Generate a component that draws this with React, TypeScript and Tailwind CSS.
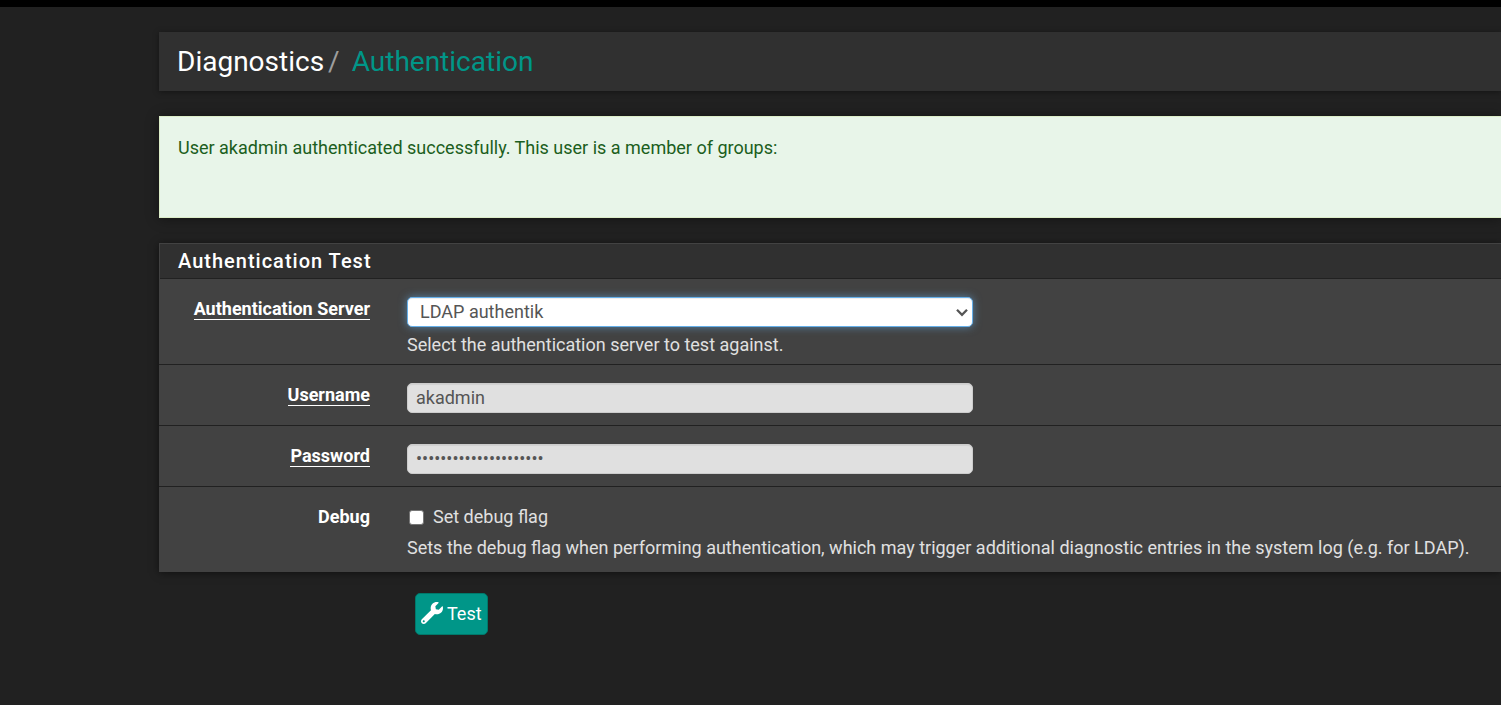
import type { ReactNode } from 'react';
import { FaWrench } from 'react-icons/fa';
import clsx from 'clsx';

const inputClass =
  'block h-[30px] w-[566px] max-w-full rounded-[5px] border border-[#cccccc] bg-[#e0e0e0] px-2 pb-0.5 text-[#555555] shadow-[inset_0_1px_1px_rgba(0,0,0,0.075)] outline-none';

interface FormRowProps {
  label: string;
  htmlFor: string;
  required?: boolean;
  last?: boolean;
  children: ReactNode;
}

function FormRow({ label, htmlFor, required, last, children }: FormRowProps) {
  return (
    <div className={clsx('flex pt-[18px]', last ? 'pb-3' : 'border-b border-[#212121] pb-[7px]')}>
      <div className="w-[211px] shrink-0 text-right leading-[23px]">
        <label htmlFor={htmlFor} className="font-bold text-white">
          <span className={clsx(required && 'inline-block border-b border-white leading-5')}>
            {label}
          </span>
        </label>
      </div>
      <div className="min-w-0 flex-1 pr-4 pl-[37px]">{children}</div>
    </div>
  );
}

export default function App() {
  return (
    <div className="min-h-screen border-t-[7px] border-black bg-[#212121] pt-[25px] pl-[159px] font-['Roboto',sans-serif] text-[18px] leading-[25px] text-[#e0e0e0]">
      {/* Breadcrumb */}
      <header className="bg-[#303030] px-[18px] py-3 shadow-[0_1px_6px_rgba(0,0,0,0.4)]">
        <h1 className="flex text-[28px] leading-[35px]">
          <a href="#" className="text-white">Diagnostics</a>
          <span className="mr-3 ml-1 text-[#9e9e9e]">/</span>
          <a href="#" className="text-[#009688]">Authentication</a>
        </h1>
      </header>

      {/* Result message */}
      <div
        role="alert"
        className="mt-[25px] h-[102px] border border-r-0 border-[#dcedc8] bg-[#e8f5e9] px-[18px] pt-[18px] text-[#1b5e20] shadow-[0_1px_12px_rgba(0,0,0,0.4)]"
      >
        User akadmin authenticated successfully. This user is a member of groups:
      </div>

      <form onSubmit={(e) => e.preventDefault()}>
        <section className="mt-[25px] bg-[#424242] shadow-[0_1px_8px_rgba(0,0,0,0.5)]">
          <div className="border-t border-l border-[#424242]">
            <h2 className="border-b border-[#212121] bg-[#303030] px-[18px] py-[5px] text-[20px] leading-6 font-medium tracking-[1px] text-white">
              Authentication Test
            </h2>
          </div>

          <FormRow label="Authentication Server" htmlFor="authmode" required>
            <div className="relative mb-[5px] w-[566px] max-w-full">
              <select
                id="authmode"
                className="block h-[30px] w-full appearance-none rounded-[5px] border border-[#66afe9] bg-white px-3 pb-0.5 text-[#555555] shadow-[inset_0_1px_1px_rgba(0,0,0,0.075),0_0_8px_rgba(102,175,233,0.6)] outline-none"
              >
                <option>LDAP authentik</option>
                <option>Local Database</option>
              </select>
              <svg
                className="pointer-events-none absolute top-[11px] right-[5px] h-[9px] w-3"
                viewBox="0 0 12 9"
                fill="none"
                stroke="#555555"
                strokeWidth="2.3"
              >
                <path d="M1 1.8 L6 6.8 L11 1.8" />
              </svg>
            </div>
            <p>Select the authentication server to test against.</p>
          </FormRow>

          <FormRow label="Username" htmlFor="username" required>
            <input id="username" type="text" defaultValue="akadmin" className={clsx(inputClass, 'mb-[5px]')} />
          </FormRow>

          <FormRow label="Password" htmlFor="password" required>
            <input
              id="password"
              type="password"
              defaultValue="correcthorsebatteries"
              className={clsx(inputClass, 'mb-[5px]')}
            />
          </FormRow>

          <FormRow label="Debug" htmlFor="debug" last>
            <label className="mb-[7px] flex items-center leading-[23px]">
              <input
                id="debug"
                type="checkbox"
                className="mt-px mr-[9px] ml-0.5 size-[15px] appearance-none rounded-[3px] border border-[#767676] bg-white"
              />
              Set debug flag
            </label>
            <p>
              Sets the debug flag when performing authentication, which may trigger additional diagnostic entries in
              the system log (e.g. for LDAP).
            </p>
          </FormRow>
        </section>

        <button
          type="submit"
          className="mt-[21px] ml-64 flex h-[42px] items-center gap-1 rounded-[5px] border border-[#00796b] bg-[#009688] px-[5px] pb-0.5 text-white"
        >
          <FaWrench size={22} />
          Test
        </button>
      </form>
    </div>
  );
}
